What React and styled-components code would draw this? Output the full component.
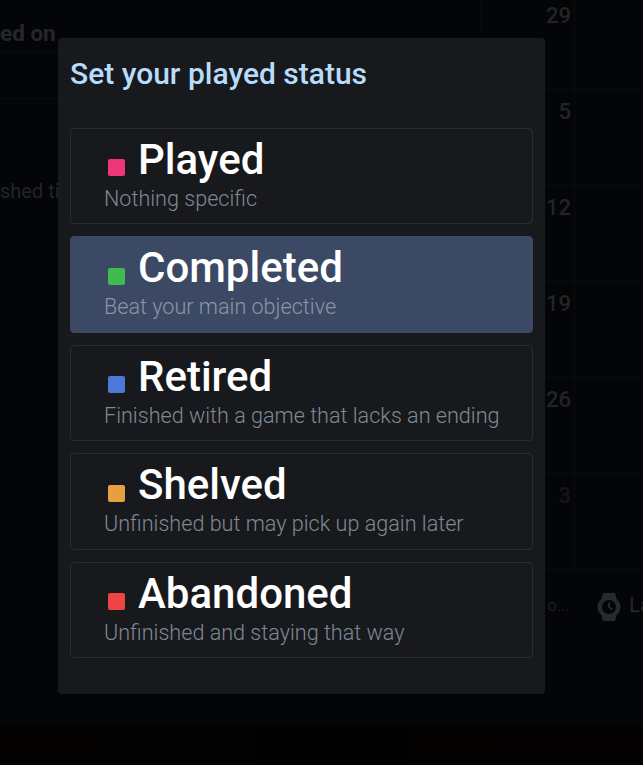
import styled, { createGlobalStyle } from "styled-components";

const Global = createGlobalStyle`
  html, body {
    margin: 0;
    height: 100%;
    background: #040506;
    overflow: hidden;
  }
  * {
    box-sizing: border-box;
  }
`;

const Page = styled.div`
  position: relative;
  width: 643px;
  height: 765px;
  overflow: hidden;
  font-family: Roboto, "Liberation Sans", sans-serif;
  background: #040506;
`;

const Backdrop = styled.div`
  height: 725px;
  display: flex;
  flex-direction: column;
`;

const Columns = styled.div`
  display: flex;
  height: 576px;
  margin-top: -6px;
  flex: none;
`;

const SideTable = styled.div`
  width: 480px;
  padding-top: 24px;
`;

const SideHeader = styled.div`
  height: 34px;
  border-bottom: 1px solid #0a0b0d;
  color: #25272b;
  font-size: 22.5px;
  font-weight: 700;
  line-height: 30px;
`;

const SideRow = styled.div`
  height: 47px;
  border-bottom: 1px solid #0a0b0d;
`;

const SideCell = styled.div`
  padding-top: 78px;
  color: #222428;
  font-size: 20px;
  line-height: 28px;
`;

const Calendar = styled.div`
  flex: 1;
  display: grid;
  grid-template-columns: 94px 1fr;
  grid-auto-rows: 96px;
  border-left: 1px solid #08090b;
`;

const DayCell = styled.div`
  border-right: 1px solid #0a0b0d;
  border-bottom: 1px solid #0a0b0d;
  padding: 7px 3px 0 0;
  text-align: right;
  color: ${(p) => (p.$faded ? "#141518" : "#222427")};
  font-size: 22px;
  font-weight: 500;
  line-height: 30px;
`;

const EmptyCell = styled.div`
  border-bottom: 1px solid #0a0b0d;
`;

const Footer = styled.div`
  display: flex;
  align-items: center;
  justify-content: flex-end;
  height: 70px;
  margin-right: -8px;
  color: #27292d;
  font-size: 20px;
`;

const FooterClip = styled.span`
  margin-right: 28px;
  color: #1d1f22;
  font-size: 16px;
`;

const WatchIcon = styled.svg`
  width: 24px;
  height: 30px;
  margin: 4px 8px 0 0;
  fill: #27292d;
`;

const Strip = styled.div`
  height: 40px;
  display: grid;
  grid-template-columns: 110px 142px 160px 95px 136px;
  background: #010102;
`;

const Thumb = styled.div`
  background: ${(p) => p.$bg};
`;

const Overlay = styled.div`
  position: absolute;
  left: 58px;
  top: 38px;
  width: 487px;
  height: 656px;
  padding: 12px;
  border-radius: 4px;
  background: #18191d;
`;

const Title = styled.h2`
  margin: 0 0 34.8px;
  height: 43px;
  color: #b7dcfb;
  font-size: 30px;
  font-weight: 500;
  line-height: 48px;
  white-space: nowrap;
`;

const Options = styled.div`
  display: flex;
  flex-direction: column;
  gap: 12px;
`;

const Option = styled.div`
  height: 96.5px;
  padding: 6px 0 6px 33px;
  border-radius: 4px;
  border: 1px solid ${(p) => (p.$selected ? "#3c4964" : "#2a2b38")};
  background: ${(p) => (p.$selected ? "#3c4964" : "transparent")};
`;

const OptionHead = styled.div`
  display: flex;
  align-items: center;
  height: 50px;
  color: #fff;
  font-size: 42px;
  font-weight: 500;
  line-height: 50px;
`;

const Swatch = styled.span`
  flex: none;
  width: 17px;
  height: 17px;
  margin: 16px 13px 0 4px;
  border-radius: 2px;
  background: ${(p) => p.$color};
`;

const Description = styled.div`
  color: ${(p) => (p.$selected ? "#8b96a5" : "#7f8995")};
  font-size: 21.6px;
  font-weight: 300;
  line-height: 28px;
  white-space: nowrap;
`;

const days = ["29", "5", "12", "19", "26", "3"];

const statuses = [
  { name: "Played", color: "#ee3578", text: "Nothing specific" },
  { name: "Completed", color: "#40bb4d", text: "Beat your main objective", selected: true },
  { name: "Retired", color: "#4c78d8", text: "Finished with a game that lacks an ending" },
  { name: "Shelved", color: "#e8a03e", text: "Unfinished but may pick up again later" },
  { name: "Abandoned", color: "#ee4444", text: "Unfinished and staying that way" },
];

export default function App() {
  return (
    <Page>
      <Global />
      <Backdrop>
        <Columns>
          <SideTable>
            <SideHeader>ed on</SideHeader>
            <SideRow />
            <SideCell>shed ti</SideCell>
          </SideTable>
          <Calendar>
            {days.flatMap((day, i) => [
              <DayCell key={day} $faded={i === 5}>
                {day}
              </DayCell>,
              <EmptyCell key={day + "-rest"} />,
            ])}
          </Calendar>
        </Columns>
        <Footer>
          <FooterClip>o...</FooterClip>
          <WatchIcon viewBox="0 0 24 30">
            <path
              fillRule="evenodd"
              d="M6 1h12l1.5 6a10 10 0 0 1 0 16L18 29H6l-1.5-6a10 10 0 0 1 0-16L6 1zm6 7a7 7 0 1 0 0 14 7 7 0 0 0 0-14z"
            />
            <path d="M11 10.5h2v4l3 2.6-1.3 1.4-3.7-3.2z" />
          </WatchIcon>
          <span>La</span>
        </Footer>
      </Backdrop>
      <Strip>
        <Thumb $bg="#030201" />
        <Thumb $bg="#010201" />
        <Thumb $bg="#010102" />
        <Thumb $bg="#030201" />
        <Thumb $bg="#030101" />
      </Strip>
      <Overlay>
        <Title>Set your played status</Title>
        <Options>
          {statuses.map((s) => (
            <Option key={s.name} $selected={s.selected}>
              <OptionHead>
                <Swatch $color={s.color} />
                {s.name}
              </OptionHead>
              <Description $selected={s.selected}>{s.text}</Description>
            </Option>
          ))}
        </Options>
      </Overlay>
    </Page>
  );
}
